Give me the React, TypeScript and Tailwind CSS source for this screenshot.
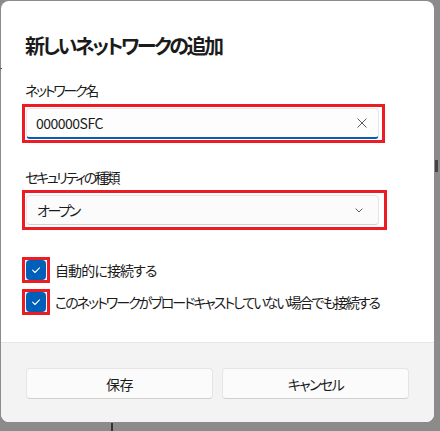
import React from "react";

const font = { fontFamily: '"Noto Sans CJK JP", "Noto Sans", sans-serif' };

function Check() {
  return (
    <div className="w-[28px] h-[26px] border-[3px] border-[#ed1c24] flex items-center justify-center shrink-0">
      <div className="w-[20px] h-[20px] rounded-[4px] bg-[#005fb8] flex items-center justify-center">
        <svg width="12" height="12" viewBox="0 0 12 12" fill="none">
          <path d="M2.6 6.2 L5 8.5 L9.5 3.8" stroke="white" strokeWidth="1.1" strokeLinecap="round" strokeLinejoin="round" />
        </svg>
      </div>
    </div>
  );
}

export default function App() {
  return (
    <div
      className="relative w-[440px] h-[431px] bg-[#8b8b8b] overflow-hidden text-[#1b1b1b] [font-feature-settings:'palt']"
      style={font}
    >
      <div className="absolute left-[111px] top-[423px] w-[2px] h-[8px] bg-[#333]" />
      <div className="absolute left-[435px] top-[160px] w-[3px] h-[12px] bg-[#444]" />
      <div className="absolute left-[0px] top-[68px] w-[2px] h-px bg-[#555]" />

      <div className="ml-px mt-px w-[433px] h-[421px] bg-white rounded-[8px] overflow-hidden flex flex-col">
        <div className="flex-1 pl-[24px] pt-[31px] flex flex-col">
          <div className="text-[20px] leading-[28px] font-semibold tracking-[-2.5px]">新しいネットワークの追加</div>

          <div className="mt-[20px] text-[14px] leading-[20px] tracking-[-2.3px]">ネットワーク名</div>
          <div className="mt-[4px] w-[363px] h-[39px] border-[3px] border-[#ed1c24] -ml-[3px] pl-px pr-[3px] py-px">
            <div className="h-full bg-[#fdfdfd] rounded-[4px] border border-[#e5e5e5] border-b-2 border-b-[#005fb8] flex items-center pl-[9px] pr-[10px]">
              <span className="flex-1 text-[14px] leading-[20px] tracking-[-0.5px]">000000SFC</span>
              <svg width="10" height="10" viewBox="0 0 10 10" className="mr-[1px]">
                <path d="M0.5 0.5 L9.5 9.5 M9.5 0.5 L0.5 9.5" stroke="#5c5c5c" strokeWidth="1" />
              </svg>
            </div>
          </div>

          <div className="mt-[24px] text-[14px] leading-[20px] tracking-[-2.3px]">セキュリティの種類</div>
          <div className="mt-[3px] w-[365px] h-[40px] border-[3px] border-[#ed1c24] -ml-[3px] pl-px pr-[5px] py-[2px]">
            <div className="h-full bg-[#fbfbfb] rounded-[4px] border border-[#e5e5e5] border-b-[#d0d0d0] flex items-center pl-[10px] pr-[15px]">
              <span className="flex-1 text-[14px] leading-[20px] tracking-[-2.3px]">オープン</span>
              <svg width="8" height="5" viewBox="0 0 8 5">
                <path d="M0.6 0.6 L4 4 L7.4 0.6" stroke="#5c5c5c" strokeWidth="1" fill="none" />
              </svg>
            </div>
          </div>

          <div className="mt-[27px] -ml-[3px] flex items-center gap-[5px]">
            <Check />
            <span className="text-[14px] leading-[20px] tracking-[-0.9px]">自動的に接続する</span>
          </div>
          <div className="mt-[6px] -ml-[3px] flex items-center gap-[5px]">
            <Check />
            <span className="text-[14px] leading-[20px] tracking-[-2px]">このネットワークがブロードキャストしていない場合でも接続する</span>
          </div>
        </div>

        <div className="h-[80px] bg-[#f3f3f3] border-t border-[#e5e5e5] px-[25px] pt-[25px] flex gap-[9px]">
          <button className="flex-1 h-[31px] bg-[#fbfbfb] rounded-[4px] border border-[#e5e5e5] border-b-[#d0d0d0] text-[14px] leading-[20px] tracking-[-0.5px]">保存</button>
          <button className="flex-1 h-[31px] bg-[#fbfbfb] rounded-[4px] border border-[#e5e5e5] border-b-[#d0d0d0] text-[14px] leading-[20px] tracking-[-1.6px]">キャンセル</button>
        </div>
      </div>
    </div>
  );
}
